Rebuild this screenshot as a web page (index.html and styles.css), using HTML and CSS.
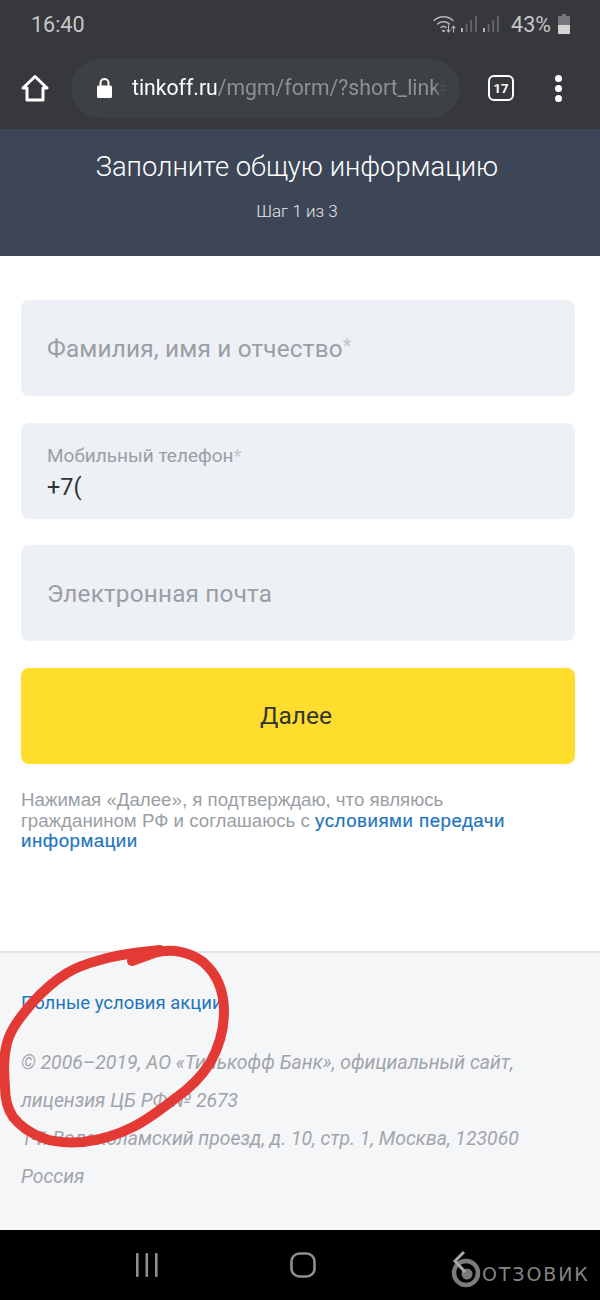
FILE: index.html
```html
<!DOCTYPE html>
<html lang="ru">
<head>
<meta charset="utf-8">
<title>Тинькофф</title>
<link rel="stylesheet" href="styles.css">
</head>
<body>
<div class="screen">
  <div class="chrome">
    <div class="status">
      <span class="time">16:40</span>
      <div class="status-right">
        <svg class="ic-wifi" width="24" height="22" viewBox="0 0 24 22" fill="none" stroke="#b4b6b8" stroke-linecap="round">
          <path d="M1 7.500C6 2.500 15 2.500 20 7.500" stroke-width="1.500"/><path d="M4.500 11C8 8 13 8 16.500 11" stroke-width="1.500"/><path d="M8 14.500C9.500 13 11.500 13 13 14.500" stroke-width="1.500"/>
          <circle cx="10.500" cy="18" r="1.300" fill="#b4b6b8" stroke="none"/>
          <path d="M15.500 12V19M13.800 17L15.500 19L17.200 17M20.500 19V13M18.800 15L20.500 13L22.200 15" stroke-width="1.100"/>
        </svg>
        <svg class="ic-signal" width="16" height="18" viewBox="0 0 16 18" fill="#66686b"><rect x="0" y="13" width="1.800" height="4" fill="#c4c5c6"/><rect x="4.700" y="9" width="1.800" height="8"/><rect x="9.300" y="5" width="1.800" height="12"/><rect x="14" y="1" width="1.800" height="16"/></svg>
        <svg class="ic-signal" width="16" height="18" viewBox="0 0 16 18" fill="#66686b"><rect x="0" y="13" width="1.800" height="4" fill="#c4c5c6"/><rect x="4.700" y="9" width="1.800" height="8"/><rect x="9.300" y="5" width="1.800" height="12"/><rect x="14" y="1" width="1.800" height="16"/></svg>
        <span class="pct">43%</span>
        <svg class="ic-batt" width="12" height="20" viewBox="0 0 12 20"><path d="M4 0H8V2H11Q12 2 12 3V19Q12 20 11 20H1Q0 20 0 19V3Q0 2 1 2H4Z" fill="#75777a"/><path d="M0 11H12V19Q12 20 11 20H1Q0 20 0 19Z" fill="#d3d4d4"/></svg>
      </div>
    </div>
    <div class="toolbar">
      <svg class="ic-home" width="28" height="28" viewBox="0 0 28 28" fill="none" stroke="#fff" stroke-width="3" stroke-linejoin="round"><path d="M2 14L14 2.500L26 14H22V26H6V14Z"/></svg>
      <div class="omnibox">
        <svg class="ic-lock" width="15" height="20" viewBox="0 0 15 20"><path d="M3.500 8V5A4 4 0 0 1 11.500 5V8" fill="none" stroke="#fff" stroke-width="2"/><rect y="7.500" width="15" height="12.500" rx="1.500" fill="#fff"/></svg>
        <span class="url"><span class="host">tinkoff.ru</span>/mgm/form/?short_link=</span>
      </div>
      <span class="tabs">17</span>
      <span class="menu"><i></i><i></i><i></i></span>
    </div>
  </div>

  <header class="hero">
    <h1>Заполните общую информацию</h1>
    <p>Шаг 1 из 3</p>
  </header>

  <main class="form">
    <div class="field field-empty">Фамилия, имя и отчество<span class="req">*</span></div>
    <div class="field field-filled">
      <span class="label">Мобильный телефон<span class="req">*</span></span>
      <span class="value">+7(</span>
    </div>
    <div class="field field-empty">Электронная почта</div>
    <div class="submit">Далее</div>
    <p class="consent">Нажимая «Далее», я подтверждаю, что являюсь<br>гражданином РФ и соглашаюсь с <a href="#">условиями передачи<br>информации</a></p>
  </main>

  <footer class="foot">
    <a href="#" class="terms">Полные условия акции</a>
    <p class="legal">© 2006–2019, АО «Тинькофф Банк», официальный сайт,<br>лицензия ЦБ РФ № 2673<br>1-й Волоколамский проезд, д. 10, стр. 1, Москва, 123060<br>Россия</p>
  </footer>

  <nav class="sysnav">
    <svg class="ic-recent" width="24" height="24" viewBox="0 0 24 24" fill="#8f8f8f"><rect x="1" width="2.600" height="24" rx="1"/><rect x="10.500" width="2.600" height="24" rx="1"/><rect x="20" width="2.600" height="24" rx="1"/></svg>
    <svg class="ic-homebtn" width="26" height="26" viewBox="0 0 26 26" fill="none" stroke="#8f8f8f" stroke-width="2.600"><rect x="1.500" y="1.500" width="23" height="23" rx="8"/></svg>
    <div class="mark">
      <svg width="30" height="38" viewBox="0 0 30 38" fill="none"><circle cx="15" cy="23" r="12" stroke="#7b7b7b" stroke-width="4.500"/><circle cx="16" cy="24" r="5.500" fill="#7b7b7b"/><path d="M13 2L4 11L14 22" stroke="#a8a8a8" stroke-width="3"/></svg>
      <span>ОТЗОВИК</span>
    </div>
  </nav>

  <svg class="scribble" width="240" height="210" viewBox="0 940 240 210" fill="none" stroke="#e43a36" stroke-width="10" stroke-linecap="round" stroke-linejoin="round">
    <path d="M132 961L154 953C172 948 190 952 203 962C216 973 224 990 224 1012C224 1030 219 1047 210 1063C201 1077 190 1088 177 1097C163 1108 149 1119 133 1127C117 1135 100 1140 83 1142C68 1143 55 1143 43 1138C30 1133 20 1126 13 1117C7 1108 5 1098 5 1087C4 1072 3 1058 7 1043C11 1028 22 1015 33 1002C43 991 54 981 67 973C77 967 89 963 100 960C114 956 128 953 160 950"/>
  </svg>
</div>
</body>
</html>
```
FILE: styles.css
```css
* { box-sizing: border-box; }
html, body { margin: 0; padding: 0; }
body { width: 600px; height: 1300px; overflow: hidden; background: #fff; font-family: "Roboto", "Liberation Sans", sans-serif; }
.screen { position: relative; width: 600px; height: 1300px; display: flex; flex-direction: column; }

.chrome { height: 129px; background: #36383b; flex: none; }
.status { height: 50px; padding: 0 30px 2px 31px; display: flex; align-items: center; justify-content: space-between; }
.time { color: #c6c7c8; font-size: 21.500px; }
.status-right { display: flex; align-items: center; color: #c6c7c8; }
.ic-wifi { margin-right: 4px; }
.ic-signal { margin-right: 6px; }
.pct { font-size: 21.500px; margin: 0 7px 0 6px; }
.toolbar { height: 76px; padding: 0 35px 0 21px; display: flex; align-items: center; }
.omnibox { width: 389px; height: 59px; margin-left: 22px; border-radius: 30px; background: #3e4144; display: flex; align-items: center; padding-left: 26px; flex: none; }
.ic-lock { flex: none; }
.url { margin-left: 20px; font-size: 21.200px; line-height: 30px; color: #8e9092; white-space: nowrap; width: 314px; overflow: hidden; mask-image: linear-gradient(to right, #000 96%, transparent); }
.host { color: #fff; }
.tabs { width: 26px; height: 26px; margin-left: 28px; border: 2.500px solid #fff; border-radius: 6px; color: #fff; font-size: 13px; font-weight: 700; display: flex; align-items: center; justify-content: center; flex: none; }
.menu { margin-left: 41px; display: flex; flex-direction: column; gap: 3px; flex: none; }
.menu i { display: block; width: 7px; height: 7px; border-radius: 50%; background: #fff; }

.hero { height: 127px; background: #3d4656; color: #fff; text-align: center; flex: none; padding-right: 6px; }
.hero h1 { margin: 0; padding-top: 19px; font-size: 27.300px; line-height: 38px; font-weight: 300; }
.hero p { margin: 15px 0 0; font-size: 17px; line-height: 20px; font-weight: 300; color: #e4e6e9; }

.form { flex: none; height: 695px; padding: 44px 25px 0 21px; display: flex; flex-direction: column; gap: 26.600px; }
.field { height: 96px; border-radius: 8px; background: #edf0f5; padding: 0 26px; flex: none; }
.field-empty { display: flex; align-items: center; font-size: 24.300px; color: #9a9ea5; letter-spacing: 0.200px; }
.field-empty .req { font-size: 20px; margin-bottom: 4px; }
.req { color: #c3c6cb; }
.field-filled { padding-top: 21px; display: flex; flex-direction: column; }
.label { font-size: 19px; line-height: 24px; color: #9a9ea5; }
.value { font-size: 23.500px; line-height: 34px; color: #333; margin-top: 2px; }
.submit { height: 96px; border-radius: 8px; background: #ffdd2d; color: #333; font-size: 24.500px; display: flex; align-items: center; justify-content: center; flex: none; padding-right: 4px; }
.consent { margin: 0; font-family: "Liberation Sans", sans-serif; font-size: 18.700px; line-height: 20.500px; color: #9a9ea5; }
.consent a { color: #1f75bd; text-decoration: none; letter-spacing: 0.500px; -webkit-text-stroke: 0.200px #1f75bd; }

.foot { flex: none; height: 279px; background: #f5f6f8; border-top: 2px solid #e2e4e7; padding: 38px 22px 0 21px; }
.terms { display: block; font-size: 18.500px; line-height: 24px; color: #1f75bd; text-decoration: none; }
.legal { margin: 29px 0 0; font-size: 19.400px; line-height: 38px; font-style: italic; color: #a1a5ab; }

.sysnav { position: relative; flex: none; height: 70px; background: #000; display: flex; align-items: center; padding-left: 135px; }
.ic-recent { margin-top: -1px; }
.ic-homebtn { margin-left: 131px; }
.mark { margin-left: 135px; display: flex; align-items: flex-end; margin-top: 8px; flex: none; }
.mark span { font-family: "DejaVu Sans", sans-serif; font-size: 19px; line-height: 28px; color: #858585; margin-left: 1px; letter-spacing: 1.900px; }

.scribble { position: absolute; left: 0; top: 940px; }
```
